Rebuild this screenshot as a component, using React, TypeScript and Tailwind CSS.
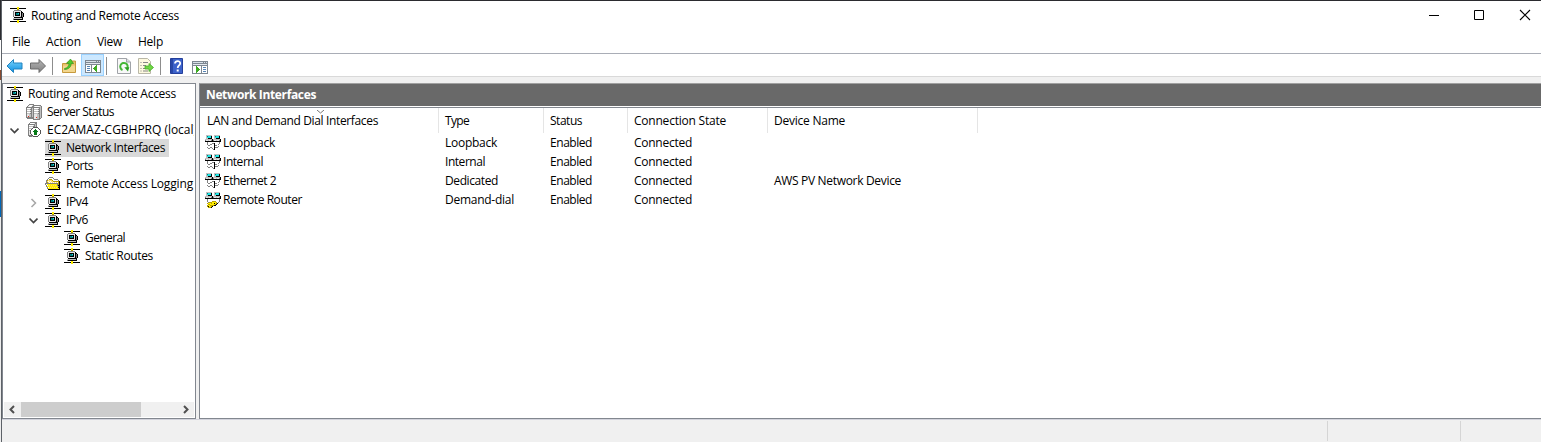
import { useLayoutEffect, useRef, useState, type ReactNode } from "react";

const palette: Record<string, string> = {
  K: "#000000", D: "#555555", d: "#808080", g: "#c0c0c0", w: "#ffffff", l: "#e6e6e6",
  y: "#ffee00", Y: "#b8a000", t: "#008080", c: "#20e4e4", G: "#087a18", r: "#e03020", o: "#ffdf70",
};

function Pixels({ rows, className = "" }: { rows: string[]; className?: string }) {
  return (
    <svg className={`block shrink-0 ${className}`} width={16} height={16} viewBox="0 0 16 16" shapeRendering="crispEdges">
      {rows.flatMap((row, y) =>
        [...row].map((ch, x) =>
          palette[ch] ? <rect key={`${x}-${y}`} x={x} y={y} width={1} height={1} fill={palette[ch]} /> : null,
        ),
      )}
    </svg>
  );
}

const network = [
  ".......yy.......",
  "KKKKKKKyyKKKKKKK",
  ".......YY.......",
  "....ddddddd.....",
  "...dlllllllK....",
  "...dlKKKKKlKK...",
  "...dlKttcKlKdK..",
  "...dlKtttKlKdK..",
  "...dlKKKKKlKdK..",
  "...dllllllgKdK..",
  "....KKKKKKKKK...",
  "...gggggggggK...",
  "...dKKKKKKKKK...",
  ".......yy.......",
  "KKKKKKKyyKKKKKKK",
  ".......yy.......",
];

const servers = [
  "...ddddd........",
  "..dlwwldddddddd.",
  ".dlwwlddlwwwwlgd",
  "ddddddddddddddgd",
  "dwwwldgdwwwwldgd",
  "dgggddgdggggddgd",
  "dwwwldgdwwwwldgd",
  "dgggddgdggggddgd",
  "dwwwldgdwwwwldgd",
  "dgggddgdggggddgd",
  "dllggdgdlllggdgd",
  "dllggdgdlllggdgd",
  "dlrggdgdlllggdgd",
  "ddddddddllrggdgd",
  ".dddddddlllggdd.",
  ".......ddddddd..",
];

const activeServer = [
  "....ddddddd.....",
  "...dwwwwldd.....",
  "..dddddddgd.....",
  "..dwwwwldgd.....",
  "..dggggddgd.....",
  "..dwwwwDDDDD....",
  "..dgggDwwwwwD...",
  "..dwwDwwwGwwwD..",
  "..dgDwwwGGGwwwD.",
  "..dlDwwGGGGGwwD.",
  "..dlDwwwGGGwwwD.",
  "..dlDwwwGGGwwwD.",
  "..dllDwwGGGwwD..",
  "..ddddDwwwwwD...",
  "...dddgDDDDD....",
  "................",
];

const folder = [
  "................",
  "....dddd........",
  "...dwwwwd.......",
  "..dwYYYwwdddd...",
  ".dYooooYwwwwwd..",
  ".dowowooYYYYYYK.",
  ".dYowowowowowYK.",
  "dddddddddddddYK.",
  "dwyyyyyyyyyydYK.",
  ".dwyoyoyoyoydKK.",
  ".dyyyyyyyyyyydK.",
  "..dwyoyoyoyoyKK.",
  "..dyyyyyyyyyyyK.",
  "...KKKKKKKKKKKK.",
  "................",
];

const adapter = [
  ".gggggg..gggggg.",
  ".gtcccK..gtcccK.",
  ".gccccK..gccccK.",
  ".ggKKKK..ggKKKK.",
  "gggggggKgggggggK",
  "dllglldKdllglldK",
  "KKKKKKKKKKKKKKKK",
  "..d...........d.",
  "..d....ddK....d.",
  "..d..ddwwK...d..",
  "...ddwwwwKdd....",
  ".....wwwwK...d..",
  "..d..ddwwKddd...",
  "...dd..dwK......",
  "........dK......",
  "................",
];

const dialAdapter = [
  ...adapter.slice(0, 8),
  "..d...........d.",
  "..d....YYYY...d.",
  "...dYYYyyyyY.d..",
  "..YyyyYyyKyYK...",
  "...YYyyyyyYK....",
  "..YyyYYYYKK.....",
  "..YKyyYK........",
  "...YYYK.........",
];

/* Spreads a label over the advance width that the shell font gives it. */
function Label({ children, w, className = "" }: { children: string; w: number; className?: string }) {
  const ref = useRef<HTMLSpanElement>(null);
  const [spacing, setSpacing] = useState(0);
  useLayoutEffect(() => {
    if (ref.current) {
      const natural = ref.current.getBoundingClientRect().width;
      setSpacing((w - natural) / children.length);
    }
  }, [w, children]);
  return (
    <span ref={ref} className={`inline-block whitespace-pre ${className}`} style={{ letterSpacing: spacing }}>
      {children}
    </span>
  );
}

function Chevron({ open }: { open: boolean }) {
  return (
    <svg width={10} height={10} viewBox="0 0 10 10" fill="none" className="block shrink-0">
      {open ? (
        <path d="M1.500 2.500l4 4 4-4" stroke="#444444" strokeWidth={1.7} />
      ) : (
        <path d="M3.500 1l4 4-4 4" stroke="#a6a6a6" strokeWidth={1.5} />
      )}
    </svg>
  );
}

function Node({ indent, icon, text, w, open, selected }: {
  indent: string; icon: string[]; text: string; w: number; open?: boolean; selected?: boolean;
}) {
  return (
    <div className={`flex h-[18px] items-center ${indent}`}>
      <span className="w-[17px] shrink-0 pt-0.5">{open !== undefined && <Chevron open={open} />}</span>
      <div className={`flex h-[18px] shrink-0 items-center gap-[5px] ${selected ? "bg-[#d9d9d9] pr-1" : ""}`}>
        <Pixels rows={icon} />
        <Label w={w}>{text}</Label>
      </div>
    </div>
  );
}

function Separator() {
  return <div className="h-[18px] w-px bg-[#8d8d8d]" />;
}

function Arrow({ forward }: { forward?: boolean }) {
  return (
    <svg width={18} height={16} viewBox="0 0 18 16" className="block">
      <defs>
        <linearGradient id={forward ? "fwd" : "back"} x1="0" y1="0" x2="0" y2="1">
          <stop offset="0" stopColor={forward ? "#b5b5b5" : "#7bd4fb"} />
          <stop offset="1" stopColor={forward ? "#808080" : "#0b8ee2"} />
        </linearGradient>
      </defs>
      {forward ? (
        <path d="M16.500 8L10 1.500V5H1.500v6H10v3.500z" fill="url(#fwd)" stroke="#6b6b6b" />
      ) : (
        <path d="M1 8l6.500-6.500V5h8.500v6H7.500v3.500z" fill="url(#back)" stroke="#2384c0" />
      )}
    </svg>
  );
}

function FolderUp() {
  return (
    <svg width={16} height={16} viewBox="0 0 16 16" className="block">
      <path d="M1.500 5.500h4l1-1.500h3l.5-1h4.500v11.500h-13z" fill="#e8c068" stroke="#c79a3d" />
      <path d="M2 7.500h12v6.500H2z" fill="#f2d68d" />
      <path d="M3.500 10.500c3-.5 4.500-2.500 4.500-5H5.500L9.500 1l3 4.500h-2.300c0 3.500-2.700 6-6.700 6z" fill="#4dcb2c" stroke="#278b18" strokeWidth={0.6} />
    </svg>
  );
}

function PaneIcon({ right }: { right?: boolean }) {
  return (
    <svg width={16} height={13} viewBox="0 0 16 13" shapeRendering="crispEdges" className="block">
      <path d="M0 0h16v13H0z" fill="#7d8791" />
      <path d="M1 1h10v1H1zM12 1h1v1h-1zM14 1h1v1h-1z" fill="#d8e0e8" />
      <path d="M1 3h14v1H1z" fill="#e3e8ee" />
      <path d="M1 5h14v7H1z" fill="#ffffff" />
      {right ? (
        <>
          <path d="M9 4h1v9H9z" fill="#7d8791" />
          <path d="M11 6h3v1h-3zM11 8h3v1h-3zM11 10h3v1h-3z" fill="#5684b5" />
          <path d="M4 5h1v1h1v1h1v1h1v1H7v1H6v1H5v1H4z" fill="#3dab22" />
        </>
      ) : (
        <>
          <path d="M6 4h1v9H6z" fill="#7d8791" />
          <path d="M2 6h3v1H2zM2 8h3v1H2zM2 10h3v1H2z" fill="#5684b5" />
          <path d="M12 5h-1v1h-1v1H9v1H8v1h1v1h1v1h1v1h1z" fill="#3dab22" />
        </>
      )}
    </svg>
  );
}

function Refresh() {
  return (
    <svg width={14} height={16} viewBox="0 0 14 16" className="block">
      <path d="M.5.5h9l4 3.500v11.500H.5z" fill="#f8f8f8" stroke="#a0a3a8" />
      <path d="M9.500.5v3.500h4" fill="#dddddd" stroke="#a0a3a8" />
      <path d="M5.500 12A3.700 3.700 0 1 1 10 10.700" fill="none" stroke="#45b636" strokeWidth={2} />
      <path d="M7.300 9.300h5L11 13.500z" fill="#2b9f21" />
    </svg>
  );
}

function ExportList() {
  return (
    <svg width={17} height={16} viewBox="0 0 17 16" className="block">
      <path d="M.5.5h9l3 3v12H.5z" fill="#fdf9df" stroke="#b9b7a7" />
      <path d="M2.500 4.500h1M5 4.500h5M2.500 7.500h1M5 7.500h3M2.500 10.500h1M5 10.500h3M2.500 13h1M5 13h5" stroke="#858585" />
      <path d="M7 8h4V5.500l4.500 4-4.500 4V11H7z" fill="#70d744" stroke="#44ac26" strokeWidth={0.8} />
    </svg>
  );
}

function HelpBook() {
  return (
    <svg width={13} height={16} viewBox="0 0 13 16" className="block">
      <path d="M.5.5h12v15H.5z" fill="#3c62ca" stroke="#243f9b" />
      <path d="M1 1h2v14H1z" fill="#2847a7" />
      <path d="M5 5.500C5 2.500 10.200 2.200 10.200 5.300 10.200 7.500 7.700 7.400 7.700 10" fill="none" stroke="#ffffff" strokeWidth={1.8} />
      <path d="M6.700 11.500h2v2h-2z" fill="#ffffff" />
    </svg>
  );
}

function Cell({ className, children }: { className: string; children?: ReactNode }) {
  return <div className={`flex shrink-0 items-center ${className}`}>{children}</div>;
}

const interfaces = [
  { name: "Loopback", nw: 52, type: "Loopback", tw: 52, icon: adapter },
  { name: "Internal", nw: 40, type: "Internal", tw: 40, icon: adapter },
  { name: "Ethernet 2", nw: 53, type: "Dedicated", tw: 53, icon: adapter, device: "AWS PV Network Device" },
  { name: "Remote Router", nw: 79, type: "Demand-dial", tw: 69, icon: dialAdapter },
];

export default function App() {
  return (
    <div className="flex h-[442px] w-[1541px] overflow-hidden bg-white font-['Open_Sans','Noto_Sans',sans-serif] text-[12px] leading-[18px] text-black">
      <div className="flex w-px shrink-0 flex-col">
        <div className="h-[40px] bg-[#2b2b2f]" />
        <div className="h-[30px] bg-white" />
        <div className="h-2.5 bg-[#8a4a2e]" />
        <div className="h-[111px] bg-[#e8e8e8]" />
        <div className="h-[26px] bg-[#0067b8]" />
        <div className="flex-1 bg-[#ededed]" />
      </div>
      <div className="flex w-[1540px] flex-col border-l border-t border-l-[#5d6268] border-t-[#2b2b2f]">
        <header className="flex h-[29px] shrink-0 items-center">
          <Pixels rows={network} className="mb-px ml-2" />
          <Label w={148} className="ml-[5px]">Routing and Remote Access</Label>
          <svg className="mb-px ml-auto mr-[10px] block" width={103} height={12} viewBox="0 0 103 12" fill="none" stroke="#000000">
            <path d="M1 6.500h10" />
            <path d="M46.500 1.500h9v9h-9z" />
            <path d="M92 1l10 10M102 1L92 11" strokeWidth={1.100} />
          </svg>
        </header>
        <nav className="flex h-[23px] shrink-0 items-center gap-4 pl-2.5 pt-px">
          <Label w={18}>File</Label>
          <Label w={35}>Action</Label>
          <Label w={25}>View</Label>
          <Label w={25}>Help</Label>
        </nav>
        <div className="flex h-6 shrink-0 items-center border-b border-t border-b-[#d9d9d9] border-t-[#a9adb6] pl-1 pt-px">
          <Arrow />
          <div className="ml-[5px]"><Arrow forward /></div>
          <div className="ml-[5px]"><Separator /></div>
          <div className="ml-[8px]"><FolderUp /></div>
          <div className="-mt-px ml-[4px] flex h-[22px] w-[23px] items-center justify-center border border-[#99d1ff] bg-[#cce8ff] pt-[3px]"><PaneIcon /></div>
          <div className="ml-[2px]"><Separator /></div>
          <div className="ml-[10px]"><Refresh /></div>
          <div className="ml-[7px]"><ExportList /></div>
          <div className="ml-[5px]"><Separator /></div>
          <div className="ml-[9px]"><HelpBook /></div>
          <div className="ml-[9px] pt-[3px]"><PaneIcon right /></div>
        </div>
        <div className="flex h-[342px] shrink-0 gap-[3px] bg-[#f0f0f0] pt-[6px]">
          <aside className="flex h-[336px] w-[194px] shrink-0 flex-col border border-[#82878f] bg-white">
            <div className="mr-px flex-1 overflow-hidden pt-px">
              <div className="flex h-[18px] items-center gap-[5px] pl-1">
                <Pixels rows={network} />
                <Label w={148}>Routing and Remote Access</Label>
              </div>
              <Node indent="pl-[6px]" icon={servers} text="Server Status" w={67} />
              <Node indent="pl-[6px]" icon={activeServer} text="EC2AMAZ-CGBHPRQ (local)" w={150} open />
              <Node indent="pl-[25px]" icon={network} text="Network Interfaces" w={99} selected />
              <Node indent="pl-[25px]" icon={network} text="Ports" w={27} />
              <Node indent="pl-[25px]" icon={folder} text="Remote Access Logging" w={127} />
              <Node indent="pl-[25px]" icon={network} text="IPv4" w={22} open={false} />
              <Node indent="pl-[25px]" icon={network} text="IPv6" w={22} open />
              <Node indent="pl-[44px]" icon={network} text="General" w={40} />
              <Node indent="pl-[44px]" icon={network} text="Static Routes" w={68} />
            </div>
            <div className="mx-px mb-px flex h-[15px] shrink-0 items-center bg-[#f0f0f0]">
              <svg className="block" width={17} height={15} viewBox="0 0 17 15" fill="none">
                <path d="M10 4L6.500 7.500 10 11" stroke="#505050" strokeWidth={2} />
              </svg>
              <div className="h-[15px] w-[120px] bg-[#cdcdcd]" />
              <svg className="ml-auto block" width={17} height={15} viewBox="0 0 17 15" fill="none">
                <path d="M7 4l3.500 3.500L7 11" stroke="#505050" strokeWidth={2} />
              </svg>
            </div>
          </aside>
          <main className="flex h-[336px] min-w-0 flex-1 flex-col border-b border-l border-t border-b-[#82878f] border-l-[#82878f] border-t-[#a0a0a0] bg-white">
            <div className="flex h-[22px] shrink-0 items-center bg-[#696969] pl-[6px] font-bold text-white">
              <Label w={110}>Network Interfaces</Label>
            </div>
            <div className="mt-px flex h-[26px] shrink-0 border-t border-[#82878f]">
              <Cell className="relative w-[239px] border-r border-[#e5e5e5] pl-[7px]">
                <Label w={171}>LAN and Demand Dial Interfaces</Label>
                <svg className="absolute left-[117px] top-[2px]" width={7} height={4} viewBox="0 0 7 4" fill="none">
                  <path d="M0 0l3.500 3L7 0" stroke="#777777" />
                </svg>
              </Cell>
              <Cell className="w-[105px] border-r border-[#e5e5e5] pl-[6px]"><Label w={24}>Type</Label></Cell>
              <Cell className="w-[84px] border-r border-[#e5e5e5] pl-[6px]"><Label w={32}>Status</Label></Cell>
              <Cell className="w-[140px] border-r border-[#e5e5e5] pl-[6px]"><Label w={92}>Connection State</Label></Cell>
              <Cell className="w-[210px] border-r border-[#e5e5e5] pl-[6px]"><Label w={71}>Device Name</Label></Cell>
            </div>
            {interfaces.map((item) => (
              <div key={item.name} className="flex h-[19px] shrink-0">
                <div className="flex w-[238px] shrink-0 items-center gap-[2px] pl-[5px]">
                  <Pixels rows={item.icon} />
                  <Label w={item.nw}>{item.name}</Label>
                </div>
                <Cell className="w-[105px] pl-[7px]"><Label w={item.tw}>{item.type}</Label></Cell>
                <Cell className="w-[84px] pl-[7px]"><Label w={42}>Enabled</Label></Cell>
                <Cell className="w-[140px] pl-[7px]"><Label w={58}>Connected</Label></Cell>
                <Cell className="w-[210px] pl-[7px]">{item.device && <Label w={127}>{item.device}</Label>}</Cell>
              </div>
            ))}
          </main>
        </div>
        <footer className="flex flex-1 justify-end border-t border-[#d2d3dc] bg-[#f0f0f0] pt-px">
          <div className="h-5 w-[133px] border-l border-[#d5d5d5]" />
          <div className="h-5 w-[81px] border-l border-[#d5d5d5]" />
        </footer>
      </div>
    </div>
  );
}
